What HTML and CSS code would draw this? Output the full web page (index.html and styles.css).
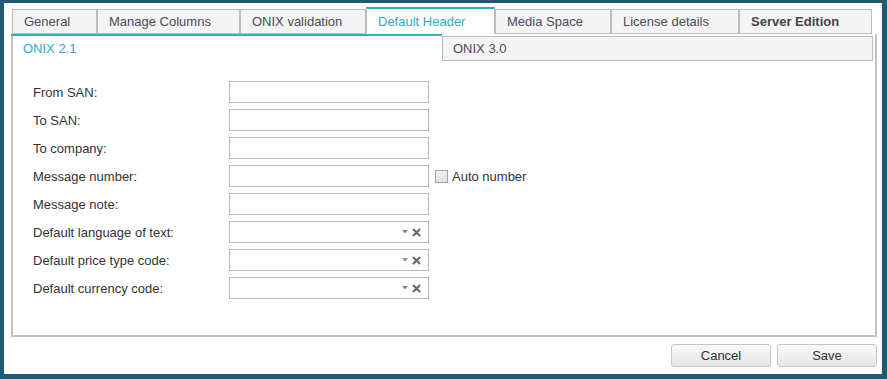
FILE: index.html
```html
<!DOCTYPE html>
<html lang="en">
<head>
    <meta charset="UTF-8">
    <meta name="viewport" content="width=device-width, initial-scale=1.0">
    <title>Default Header</title>
    <link rel="stylesheet" href="styles.css">
</head>
<body>
    <div class="window">
        <div class="tabs">
            <div class="tab tab-general">General</div>
            <div class="tab tab-columns">Manage Columns</div>
            <div class="tab tab-validation">ONIX validation</div>
            <div class="tab tab-header active">Default Header</div>
            <div class="tab tab-media">Media Space</div>
            <div class="tab tab-license">License details</div>
            <div class="tab tab-server"><b>Server Edition</b></div>
        </div>
        <div class="panel">
            <div class="subtabs">
                <div class="subtab active">ONIX 2.1</div>
                <div class="subtab">ONIX 3.0</div>
            </div>
            <div class="form">
                <label>From SAN:</label>
                <div class="field"><span class="input"></span></div>

                <label>To SAN:</label>
                <div class="field"><span class="input"></span></div>

                <label>To company:</label>
                <div class="field"><span class="input"></span></div>

                <label>Message number:</label>
                <div class="field">
                    <span class="input"></span>
                    <span class="checkbox"></span>
                    <span class="check-label">Auto number</span>
                </div>

                <label>Message note:</label>
                <div class="field"><span class="input"></span></div>

                <label>Default language of text:</label>
                <div class="field">
                    <span class="input select">
                        <svg class="arrow" width="6" height="4" viewBox="0 0 6 4"><path d="M0 0h6L3 3.5z" fill="#888"/></svg>
                        <svg class="clear" width="9" height="9" viewBox="0 0 9 9"><path d="M1 1l7 7M8 1l-7 7" stroke="#666" stroke-width="2"/></svg>
                    </span>
                </div>

                <label>Default price type code:</label>
                <div class="field">
                    <span class="input select">
                        <svg class="arrow" width="6" height="4" viewBox="0 0 6 4"><path d="M0 0h6L3 3.5z" fill="#888"/></svg>
                        <svg class="clear" width="9" height="9" viewBox="0 0 9 9"><path d="M1 1l7 7M8 1l-7 7" stroke="#666" stroke-width="2"/></svg>
                    </span>
                </div>

                <label>Default currency code:</label>
                <div class="field">
                    <span class="input select">
                        <svg class="arrow" width="6" height="4" viewBox="0 0 6 4"><path d="M0 0h6L3 3.5z" fill="#888"/></svg>
                        <svg class="clear" width="9" height="9" viewBox="0 0 9 9"><path d="M1 1l7 7M8 1l-7 7" stroke="#666" stroke-width="2"/></svg>
                    </span>
                </div>
            </div>
        </div>
        <div class="actions">
            <button>Cancel</button>
            <button>Save</button>
        </div>
    </div>
</body>
</html>
```

FILE: styles.css
```css
html, body {
    margin: 0;
    height: 100%;
    background-color: #1f5a72;
    font-family: "Liberation Sans", Arial, sans-serif;
    font-size: 13px;
    color: #333;
}
.window {
    margin: 3px 5px 5px 4px;
    height: 371px;
    background-color: white;
    padding: 4px 5px 0 7px;
    box-sizing: border-box;
}
.tabs {
    display: flex;
    align-items: flex-end;
    height: 27px;
    margin-left: 1px;
}
.tab {
    box-sizing: border-box;
    height: 25px;
    line-height: 23px;
    padding-left: 11px;
    background-color: #f4f4f4;
    border: 1px solid #bcbcbc;
    color: #4a4a58;
    white-space: nowrap;
}
.tab b {
    color: #444;
}
.tab.active {
    height: 27px;
    line-height: 25px;
    background-color: white;
    border-top: 2px solid #33afc4;
    border-bottom: none;
    color: #33a9bf;
}
.tab-general { width: 85px; }
.tab-columns { width: 143px; }
.tab-validation { width: 126px; }
.tab-header { width: 129px; }
.tab-media { width: 116px; }
.tab-license { width: 128px; }
.tab-server { width: 133px; }
.panel {
    height: 303px;
    box-sizing: border-box;
    border: 2px solid #c2c2c2;
    border-top: none;
}
.subtabs {
    display: flex;
    align-items: flex-start;
    margin-left: -2px;
    margin-right: 2px;
}
.subtab {
    box-sizing: border-box;
    white-space: nowrap;
}
.subtab.active {
    width: 431px;
    height: 26px;
    line-height: 25px;
    padding-left: 12px;
    border-top: 2px solid #33afc4;
    color: #33a9bf;
}
.subtab:not(.active) {
    flex: 1;
    margin-top: 2px;
    height: 25px;
    line-height: 23px;
    padding-left: 10px;
    background-color: #f4f4f4;
    border: 1px solid #bcbcbc;
    color: #4a4a58;
}
.form {
    display: grid;
    grid-template-columns: 196px auto;
    row-gap: 6px;
    padding: 20px 0 0 20px;
}
.form label {
    line-height: 22px;
    padding-top: 1px;
    height: 22px;
    box-sizing: border-box;
}
.field {
    display: flex;
    align-items: center;
    height: 22px;
}
.input {
    display: flex;
    align-items: center;
    justify-content: flex-end;
    width: 200px;
    height: 22px;
    box-sizing: border-box;
    border: 1px solid #b9b9b9;
    background-color: white;
}
.select .arrow {
    margin-right: 4px;
}
.select .clear {
    margin-right: 7px;
}
.checkbox {
    width: 13px;
    height: 13px;
    box-sizing: border-box;
    margin-left: 6px;
    border: 1px solid #a4a4a4;
    background: linear-gradient(#f0f0f0, #e2e2e2);
}
.check-label {
    margin-left: 4px;
}
.actions {
    display: flex;
    justify-content: flex-end;
    gap: 6px;
    padding-top: 7px;
}
.actions button {
    width: 100px;
    height: 23px;
    font-family: "Liberation Sans", Arial, sans-serif;
    font-size: 13px;
    color: #333;
    border: 1px solid #c6c6c6;
    border-radius: 3px;
    background: linear-gradient(#f9f9f9, #e6e6e6);
    cursor: pointer;
}
```
